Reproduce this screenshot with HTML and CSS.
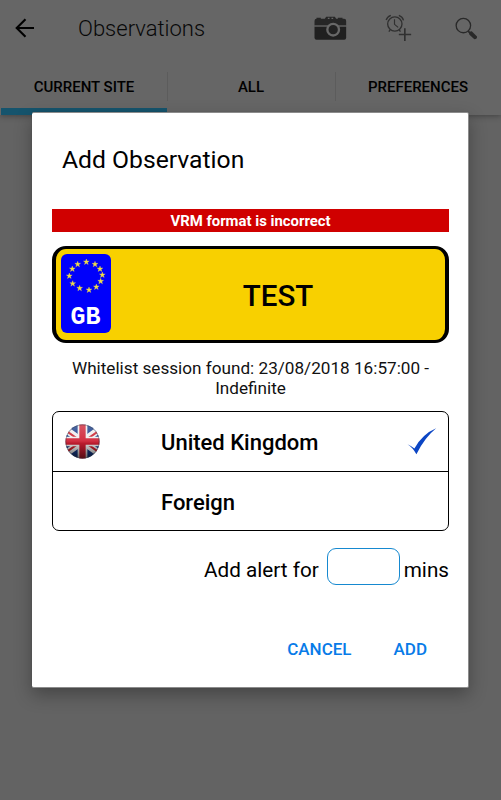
FILE: index.html
```html
<!DOCTYPE html>
<html lang="en">
<head>
<meta charset="utf-8">
<title>Observations</title>
<link rel="stylesheet" href="styles.css">
</head>
<body>
<div class="screen">
  <header class="bar">
    <svg class="back" viewBox="0 0 20 20"><path d="M19 10H2M10.500 1.200 1.700 10l8.800 8.800" fill="none" stroke="#000" stroke-width="2.100"/></svg>
    <h1 class="title">Observations</h1>
    <svg class="camera" viewBox="42 46 98 72">
      <path d="M49 54v-3h13v3h12l4-6h26l4 6h5v-3h14v3h5q6 0 6 7v13H43V61q0-7 6-7z" fill="#262626"/>
      <path d="M43 78h95v33q0 6-6 6H49q-6 0-6-6z" fill="#202020"/>
      <path d="M43 76h95" stroke="#4a4a4a" stroke-width="2.500"/>
      <path d="M83 53h5M94 53h5" stroke="#666" stroke-width="4"/>
      <circle cx="99" cy="87" r="17.500" fill="#222" stroke="#686868" stroke-width="7"/>
    </svg>
    <svg class="alarm" viewBox="256 42 80 84" fill="none" stroke="#303030">
      <circle cx="285" cy="72" r="21.500" stroke-width="4"/>
      <path d="M284 58v15l11 9" stroke-width="3.500"/>
      <path d="M259 60q3-10 14-14M297 46q11 4 14 15M271 90l-4 5M298 90l4 5" stroke-width="4"/>
      <path d="M315 85v38M297 103.500h37" stroke-width="5"/>
    </svg>
    <svg class="search" viewBox="466 49 70 70">
      <circle cx="491.500" cy="75" r="22" fill="none" stroke="#292929" stroke-width="4"/>
      <path d="m506 92 7 7" stroke="#292929" stroke-width="5"/>
      <path d="M509 99q0-7 8-7l16 16q1 7-8 9l-15-14z" fill="#292929"/>
    </svg>
  </header>
  <nav class="tabs">
    <div class="tab active"><span>CURRENT SITE</span></div>
    <div class="tab"><span>ALL</span></div>
    <div class="tab"><span>PREFERENCES</span></div>
  </nav>
  <main class="dialog">
    <h2 class="heading">Add Observation</h2>
    <div class="error">VRM format is incorrect</div>
    <div class="plate">
      <div class="country">
        <svg class="stars" viewBox="63 177 150 120">
          <defs><path id="star" d="M0-9 2.200-3H8.600L3.500 1 5.500 7.500 0 3.600-5.500 7.500-3.500 1-8.600-3H-2.200Z" fill="#f0de48" stroke="#f0de48"/></defs>
          <use href="#star" x="139" y="201"/><use href="#star" x="165" y="208"/><use href="#star" x="180" y="222"/><use href="#star" x="187" y="240"/><use href="#star" x="182" y="259"/><use href="#star" x="169" y="276"/><use href="#star" x="147" y="285"/><use href="#star" x="119" y="280"/><use href="#star" x="98" y="266"/><use href="#star" x="88" y="243"/><use href="#star" x="97" y="222"/><use href="#star" x="113" y="208"/>
        </svg>
        <span class="gb">GB</span>
      </div>
      <div class="reg">TEST</div>
    </div>
    <p class="info">Whitelist session found: 23/08/2018 16:57:00 - Indefinite</p>
    <div class="options">
      <div class="option">
        <svg class="flag" viewBox="0 0 36 36">
          <defs>
            <clipPath id="disc"><circle cx="18" cy="18" r="17.500"/></clipPath>
            <linearGradient id="shade" x2="0" y2="1"><stop offset="0" stop-color="#fff" stop-opacity=".25"/><stop offset=".48" stop-color="#fff" stop-opacity=".08"/><stop offset=".55" stop-color="#000" stop-opacity=".1"/><stop offset="1" stop-color="#000" stop-opacity=".6"/></linearGradient>
          </defs>
          <g clip-path="url(#disc)">
            <path fill="#163a87" d="M0 0h36v36H0z"/>
            <path d="M-3 3 39 33M-3 33 39 3" stroke="#eee" stroke-width="7"/>
            <path d="m-3 4 21 15M39 32 18 17M-3 32 18 17M39 4 18 19" stroke="#cb202d" stroke-width="2.200"/>
            <path d="M18 0v36M0 18h36" stroke="#eee" stroke-width="10"/>
            <path d="M18 0v36M0 18h36" stroke="#ce1e32" stroke-width="6.500"/>
            <path fill="url(#shade)" d="M0 0h36v36H0z"/>
          </g>
          <circle cx="18" cy="18" r="17" fill="none" stroke="#333" stroke-opacity=".35"/>
        </svg>
        <span class="uk">United Kingdom</span>
        <svg class="check" viewBox="83 83 90 82"><path d="M84 132q13 6 21 13 25-44 66-61-35 28-60 79-10-20-27-31z" fill="#0b45c4"/></svg>
      </div>
      <div class="option second"><span class="foreign">Foreign</span></div>
    </div>
    <div class="alert"><span class="lbl">Add alert for</span><input class="mins" aria-label="Minutes"><span class="unit">mins</span></div>
    <div class="actions"><button>CANCEL</button><button>ADD</button></div>
  </main>
</div>
</body>
</html>
```
FILE: styles.css
```css
* { box-sizing: border-box; }
body { margin: 0; font-family: Roboto, sans-serif; color: #000; }
.screen { width: 501px; height: 800px; background: #636363; overflow: hidden; }
h1, h2, p { margin: 0; }
svg { display: block; flex: none; }
span, h1 { white-space: nowrap; }
.bar { height: 57px; display: flex; align-items: flex-start; background: #666; position: relative; z-index: 1; }
.back { width: 20px; height: 20px; margin: 18px 0 0 15px; }
.title { width: 129px; margin: 14px 0 0 43px; font-size: 22px; font-weight: 300; line-height: 30px; color: #080808; }
.camera { width: 33px; height: 24px; margin: 16px 0 0 107px; }
.alarm { width: 27px; height: 28px; margin: 14px 0 0 38px; }
.search { width: 23px; height: 23px; margin: 17px 0 0 43px; }
.tabs { height: 58px; display: grid; grid-template-columns: 167px 168px 166px; background: #666; box-shadow: 0 1px 6px rgba(0,0,0,.35); }
.tab { height: 58px; padding-top: 2px; display: flex; justify-content: center; align-items: center; font-size: 15px; font-weight: 500; position: relative; }
.tab + .tab::before { content: ""; position: absolute; left: 0; top: 15px; width: 1px; height: 29px; background: #5c5c5c; }
.tab.active { border-bottom: 7px solid #15546d; margin-left: 1px; padding-top: 9px; }
.dialog { width: 437px; height: 576px; margin: -3px 0 0 32px; padding: 0 20px; background: #fff; border: 1px solid #8c8c8c; border-width: 1px 1px 1px 0; border-radius: 2px; position: relative; z-index: 2; box-shadow: 0 0 1px rgba(0,0,0,.3), 0 7px 18px rgba(0,0,0,.3); display: flex; flex-direction: column; }
.heading { height: 96px; padding: 32px 0 0 10px; font-size: 24.700px; font-weight: 400; line-height: 30px; }
.error { width: 397px; height: 23px; background: #d00000; color: #fff; font-size: 14.900px; font-weight: 700; line-height: 25px; text-align: center; }
.plate { width: 397px; height: 97px; margin-top: 14px; display: flex; background: #f8d000; border: 3px solid #000; border-width: 3px 4px; border-radius: 14px; }
.country { width: 50px; height: 79px; margin: 5px 0 0 5px; background: #0000fb; border-radius: 6px; color: #fff; }
.stars { width: 50px; height: 40px; }
.gb { display: block; font: 700 25px/28px "Liberation Mono", monospace; margin: 10px 0 0 -1px; text-align: center; }
.reg { flex: 1; font-size: 29.500px; font-weight: 500; line-height: 94px; text-align: center; }
.info { height: 54px; margin-top: 15px; width: 397px; font-size: 17.150px; line-height: 20px; text-align: center; color: #111; }
.options { width: 397px; height: 120px; margin-top: -1px; border: 1px solid #000; border-radius: 7px; }
.option { height: 59px; display: flex; align-items: center; font-size: 22px; font-weight: 500; }
.second { border-top: 1px solid #000; height: 60px; padding-left: 108px; }
.flag { width: 35px; height: 35px; margin-left: 12px; }
.uk { width: 158px; margin-left: 61px; padding-top: 2px; }
.foreign { padding-top: 2px; }
.check { width: 30px; height: 27px; margin-left: 88px; }
.alert { width: 397px; height: 37px; margin-top: 17px; display: flex; justify-content: flex-end; align-items: center; font-size: 20.700px; }
.lbl { margin: 7px 8px 0 0; }
.unit { margin: 7px 0 0 4px; }
.mins { width: 73px; height: 37px; padding: 0 6px; border: 1px solid #1689d0; border-radius: 9px; background: #fff; }
.actions { margin-top: 53px; display: flex; justify-content: flex-end; padding-right: 21px; gap: 42px; }
.actions button { border: 0; padding: 0; background: none; font: 500 17px/22px Roboto, sans-serif; color: #087be8; }
```
